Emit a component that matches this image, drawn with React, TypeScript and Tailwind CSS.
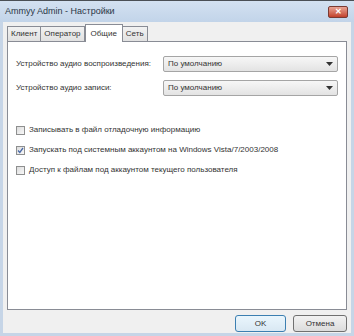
import React from "react";

const font = { fontFamily: '"Liberation Sans", Arial, sans-serif' };

function Select({ value }: { value: string }) {
  return (
    <div className="flex h-[16px] w-[175px] items-center justify-between rounded-[2px] border border-[#a5a5a5] bg-gradient-to-b from-[#f7f7f7] to-[#e3e3e3] pl-[4px] pr-[4px] text-[8px] leading-none text-[#333]">
      <span>{value}</span>
      <svg width="7" height="4" viewBox="0 0 7 4">
        <path d="M0 0h7L3.5 4z" fill="#333" />
      </svg>
    </div>
  );
}

function Check({ checked, label }: { checked?: boolean; label: string }) {
  return (
    <div className="flex h-[10px] items-center gap-[4px] text-[8px] leading-none text-[#333]">
      <span className="flex h-[9px] w-[9px] items-center justify-center border border-[#8e8f8f] bg-gradient-to-br from-[#dcdcdc] to-[#f8f8f8]">
        {checked && (
          <svg width="7" height="7" viewBox="0 0 7 7">
            <path d="M1 3.5l1.8 2L6 1" stroke="#4a6aa8" strokeWidth="1.3" fill="none" />
          </svg>
        )}
      </span>
      <span>{label}</span>
    </div>
  );
}

const tabs = ["Клиент", "Оператор", "Общие", "Сеть"];

export default function App() {
  return (
    <div style={font} className="flex h-[336px] w-[354px] flex-col overflow-hidden border-t border-[#4a4f55] bg-[#c6d5e7]">
      <div className="flex h-[21px] shrink-0 items-center justify-between bg-gradient-to-b from-[#d3e1f1] to-[#c2d4e9] pl-[5px] pr-[6px]">
        <span className="text-[9px] leading-none text-[#2a3646]">Ammyy Admin - Настройки</span>
        <span className="flex h-[12px] w-[20px] items-center justify-center rounded-[2px] border border-[#7a3a32] bg-gradient-to-b from-[#e8a394] to-[#c2402b] text-[8px] font-bold leading-none text-white">
          ✕
        </span>
      </div>
      <div className="mx-[3px] mb-[3px] flex flex-1 flex-col bg-[#f0f0f0] px-[4px] pt-[2px]">
        <div className="flex h-[17px] items-end">
          {tabs.map((t) => {
            const active = t === "Общие";
            return (
              <div
                key={t}
                className={
                  active
                    ? "relative z-10 -mb-px flex h-[18px] items-center border border-b-0 border-[#898c95] bg-white px-[5px] text-[8px] leading-none text-[#333]"
                    : "-ml-px flex h-[15px] items-center border border-b-0 border-[#898c95] bg-gradient-to-b from-[#f2f2f2] to-[#e1e1e1] px-[3px] text-[8px] leading-none text-[#333] first:ml-0"
                }
              >
                {t}
              </div>
            );
          })}
        </div>
        <div className="flex h-[269px] flex-col border border-[#898c95] bg-white pl-[8px] pt-[14px]">
          <div className="flex items-center text-[8px] leading-none text-[#333]">
            <span className="w-[147px]">Устройство аудио воспроизведения:</span>
            <Select value="По умолчанию" />
          </div>
          <div className="mt-[8px] flex items-center text-[8px] leading-none text-[#333]">
            <span className="w-[147px]">Устройство аудио записи:</span>
            <Select value="По умолчанию" />
          </div>
          <div className="mt-[29px] flex flex-col gap-[10px]">
            <Check label="Записывать в файл отладочную информацию" />
            <Check checked label="Запускать под системным аккаунтом на Windows Vista/7/2003/2008" />
            <Check label="Доступ к файлам под аккаунтом текущего пользователя" />
          </div>
        </div>
        <div className="flex justify-end gap-[7px] pt-[5px]">
          <button className="h-[17px] w-[51px] rounded-[3px] border border-[#3c7fb1] bg-gradient-to-b from-[#eaf6fd] to-[#d9e8f3] text-[8px] leading-none text-[#333]">
            OK
          </button>
          <button className="h-[17px] w-[54px] rounded-[3px] border border-[#707070] bg-gradient-to-b from-[#f2f2f2] to-[#dcdcdc] text-[8px] leading-none text-[#333]">
            Отмена
          </button>
        </div>
      </div>
    </div>
  );
}
